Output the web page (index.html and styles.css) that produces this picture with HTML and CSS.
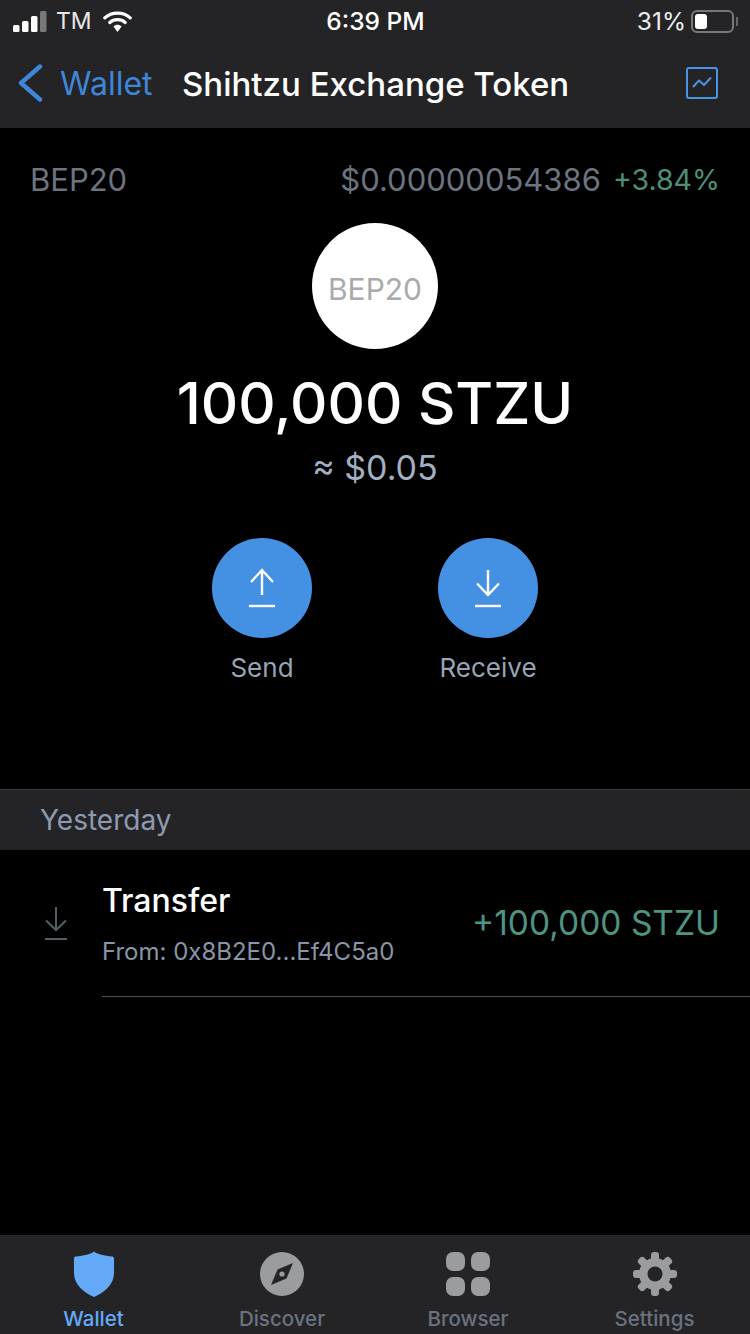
FILE: index.html
```html
<!DOCTYPE html>
<html lang="en">
<head>
<meta charset="utf-8">
<title>Shihtzu Exchange Token</title>
<link rel="stylesheet" href="styles.css">
</head>
<body>
<div class="app">
  <header class="header">
    <div class="status">
      <div class="status-left">
        <svg class="signal" width="34" height="21" viewBox="0 0 34 21"><rect x="0" y="14" width="6.500" height="7" rx="1.500" fill="#fff"/><rect x="9" y="10" width="6.500" height="11" rx="1.500" fill="#fff"/><rect x="18" y="5" width="6.500" height="16" rx="1.500" fill="#fff"/><rect x="27" y="0" width="6.500" height="21" rx="1.500" fill="#77787a"/></svg>
        <span class="carrier">TM</span>
        <svg class="wifi" width="29" height="23" viewBox="0 0 32 25"><path d="M2 8.500C9.500 1.500 22.500 1.500 30 8.500" fill="none" stroke="#fff" stroke-width="3.600" stroke-linecap="round"/><path d="M7.500 13.500C12 9.500 20 9.500 24.500 13.500" fill="none" stroke="#fff" stroke-width="3.600" stroke-linecap="round"/><path d="M11.500 18C14 15.500 18 15.500 20.500 18L16 24Z" fill="#fff"/></svg>
      </div>
      <span class="clock">6:39 PM</span>
      <div class="status-right">
        <span class="pct">31%</span>
        <div class="battery"><div class="battery-fill"></div></div>
        <div class="battery-cap"></div>
      </div>
    </div>
    <nav class="nav">
      <div class="back">
        <svg width="26" height="38" viewBox="0 0 26 38"><path d="M23 2.500L4 19L23 35.500" fill="none" stroke="#3f86d8" stroke-width="4.400" stroke-linecap="round" stroke-linejoin="round"/></svg>
        <span class="back-label">Wallet</span>
      </div>
      <h1 class="title">Shihtzu Exchange Token</h1>
      <svg class="chart" width="32" height="32" viewBox="0 0 32 32"><rect x="1" y="1" width="30" height="30" rx="2" fill="none" stroke="#4a94e6" stroke-width="2"/><path d="M7 20L13 13.500L18 18L25 10.500" fill="none" stroke="#4a94e6" stroke-width="2" stroke-linejoin="round"/></svg>
    </nav>
  </header>

  <main class="main">
    <div class="price-row">
      <span class="network">BEP20</span>
      <div class="price-group">
        <span class="price">$0.00000054386</span>
        <span class="change">+3.84%</span>
      </div>
    </div>
    <div class="logo"><span class="logo-text">BEP20</span></div>
    <div class="amount">100,000 STZU</div>
    <div class="fiat">≈ $0.05</div>
    <div class="actions">
      <div class="action">
        <div class="action-btn">
          <svg width="30" height="42" viewBox="0 0 30 42"><path d="M15 28V3M4 15L15 3L26 15" fill="none" stroke="#fff" stroke-width="2.400"/><path d="M2 39H28" stroke="#fff" stroke-width="2.400"/></svg>
        </div>
        <span class="action-label">Send</span>
      </div>
      <div class="action">
        <div class="action-btn">
          <svg width="30" height="42" viewBox="0 0 30 42"><path d="M15 3V28M4 16.500L15 28L26 16.500" fill="none" stroke="#fff" stroke-width="2.400"/><path d="M2 39H28" stroke="#fff" stroke-width="2.400"/></svg>
        </div>
        <span class="action-label">Receive</span>
      </div>
    </div>

    <div class="section-head">Yesterday</div>
    <div class="tx">
      <svg class="tx-icon" width="26" height="36" viewBox="0 0 26 36"><path d="M13 1V24M3 14.500L13 24L23 14.500" fill="none" stroke="#4f5f62" stroke-width="2"/><path d="M2 33H24" stroke="#4f5f62" stroke-width="2"/></svg>
      <div class="tx-body">
        <div class="tx-content">
          <div class="tx-text">
            <div class="tx-title">Transfer</div>
            <div class="tx-from">From: 0x8B2E0...Ef4C5a0</div>
          </div>
          <div class="tx-amount">+100,000 STZU</div>
        </div>
      </div>
    </div>
  </main>

  <footer class="tabs">
    <div class="tab tab-active">
      <svg width="42" height="46" viewBox="0 0 44 46" preserveAspectRatio="none"><path d="M22 0.500C25 3 33 5 41 5.500C42.500 5.700 43 6.500 43 8V22C43 34 32 42 22 46C12 42 1 34 1 22V8C1 6.500 1.500 5.700 3 5.500C11 5 19 3 22 0.500Z" fill="#64aaf8"/></svg>
      <span class="tab-label">Wallet</span>
    </div>
    <div class="tab">
      <svg width="44" height="44" viewBox="0 0 44 44"><circle cx="22" cy="22" r="22" fill="#9a9c9e"/><path d="M33 11L26.500 26.500L11 33L17.500 17.500Z" fill="#242426"/><circle cx="22" cy="22" r="2.600" fill="#9a9c9e"/></svg>
      <span class="tab-label">Discover</span>
    </div>
    <div class="tab">
      <svg width="44" height="44" viewBox="0 0 44 44"><rect x="0" y="0" width="19" height="19" rx="7" fill="#9a9c9e"/><rect x="25" y="0" width="19" height="19" rx="7" fill="#9a9c9e"/><rect x="0" y="25" width="19" height="19" rx="7" fill="#9a9c9e"/><rect x="25" y="25" width="19" height="19" rx="7" fill="#9a9c9e"/></svg>
      <span class="tab-label">Browser</span>
    </div>
    <div class="tab">
      <svg width="44" height="44" viewBox="0 0 44 44"><g fill="#9a9c9e"><circle cx="22" cy="22" r="16"/><rect x="18" y="0" width="8" height="10" rx="3"/><rect x="18" y="34" width="8" height="10" rx="3"/><rect x="18" y="0" width="8" height="10" rx="3" transform="rotate(45 22 22)"/><rect x="18" y="34" width="8" height="10" rx="3" transform="rotate(45 22 22)"/><rect x="18" y="0" width="8" height="10" rx="3" transform="rotate(90 22 22)"/><rect x="18" y="34" width="8" height="10" rx="3" transform="rotate(90 22 22)"/><rect x="18" y="0" width="8" height="10" rx="3" transform="rotate(135 22 22)"/><rect x="18" y="34" width="8" height="10" rx="3" transform="rotate(135 22 22)"/></g><circle cx="22" cy="22" r="7.500" fill="#242426"/></svg>
      <span class="tab-label">Settings</span>
    </div>
  </footer>
</div>
</body>
</html>
```

FILE: styles.css
```css
* { box-sizing: border-box; margin: 0; padding: 0; }
html, body { background: #000; }
body { font-family: Inter, "Liberation Sans", sans-serif; color: #fff; }
.app { width: 750px; height: 1334px; display: flex; flex-direction: column; overflow: hidden; background: #000; }

.header { height: 128px; background: #242426; flex: none; }
.status { height: 42px; display: grid; grid-template-columns: 1fr auto 1fr; align-items: center; padding: 0 12px 0 13px; }
.status-left { display: flex; align-items: center; }
.signal { margin-right: 9px; }
.carrier { font-size: 23px; line-height: 28px; color: #e8e8e8; }
.wifi { margin-left: 11px; }
.clock { font-size: 24.500px; font-weight: 500; line-height: 28px; color: #fff; }
.status-right { display: flex; align-items: center; justify-content: flex-end; }
.pct { font-size: 24.500px; line-height: 28px; color: #eee; margin-right: 5px; }
.battery { width: 43px; height: 23px; border: 2px solid #77787a; border-radius: 6px; padding: 2px; }
.battery-fill { width: 12px; height: 100%; background: #fff; border-radius: 3px; }
.battery-cap { width: 2px; height: 9px; background: #66676a; margin-left: 2px; }

.nav { height: 86px; display: flex; align-items: center; padding: 0 32px 4px 17px; }
.back { display: flex; align-items: center; width: 165px; }
.back-label { font-size: 32px; color: #3f86d8; margin-left: 17px; }
.title { flex: 1; font-size: 33px; font-weight: 500; padding-top: 2px; text-align: left; white-space: nowrap; }
.chart { flex: none; }

.main { flex: 1; display: flex; flex-direction: column; min-height: 0; }
.price-row { display: flex; justify-content: space-between; align-items: center; padding: 33px 30px 0 30px; height: 70px; }
.network { font-size: 31px; color: #6b7480; }
.price-group { display: flex; align-items: center; gap: 12px; }
.price { font-size: 31px; color: #6b7480; }
.change { font-size: 28.500px; color: #4d8f7b; }
.logo { width: 126px; height: 126px; border-radius: 50%; background: #fff; margin: 25px auto 0; padding-top: 5px; display: flex; align-items: center; justify-content: center; }
.logo-text { font-size: 30px; color: #aaa; }
.amount { font-size: 58px; font-weight: 500; line-height: 70px; text-align: center; margin-top: 19px; }
.fiat { font-size: 34px; line-height: 44px; text-align: center; color: #a3b0c4; margin-top: 8px; }
.actions { display: flex; justify-content: center; gap: 126px; margin-top: 48px; }
.action { width: 100px; display: flex; flex-direction: column; align-items: center; }
.action-btn { width: 100px; height: 100px; border-radius: 50%; background: #4491e3; display: flex; align-items: center; justify-content: center; }
.action-label { font-size: 26px; line-height: 32px; color: #98a4b6; margin-top: 14px; white-space: nowrap; }

.section-head { height: 61px; margin-top: 105px; background: #242426; border-top: 1px solid #3c3c3e; font-size: 28px; line-height: 61px; color: #8c9bb0; padding-left: 40px; }
.tx { display: flex; align-items: flex-start; height: 147px; }
.tx-icon { flex: none; margin: 56px 33px 0 43px; }
.tx-body { flex: 1; height: 147px; border-bottom: 1px solid #4e5256; }
.tx-content { display: flex; justify-content: space-between; align-items: center; padding-right: 30px; height: 146px; }
.tx-title { font-size: 32px; line-height: 40px; font-weight: 500; }
.tx-from { font-size: 24px; line-height: 30px; color: #8896a8; margin-top: 16px; }
.tx-text { padding-top: 6px; padding-bottom: 5px; }
.tx-amount { font-size: 33.500px; color: #4f9483; }

.tabs { height: 99px; flex: none; background: #242426; display: grid; grid-template-columns: 187px 190px 182px 191px; }
.tab { display: flex; flex-direction: column; align-items: center; padding-top: 16px; }
.tab svg { height: 46px; }
.tab-label { font-size: 20.500px; font-weight: 500; line-height: 24px; color: #6a7380; margin-top: 10px; }
.tab-active .tab-label { color: #64aaf8; }
```
